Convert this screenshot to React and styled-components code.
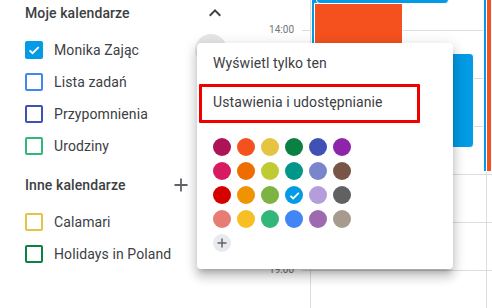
import React from 'react';
import styled, { createGlobalStyle } from 'styled-components';

const Global = createGlobalStyle`
  html, body { margin: 0; padding: 0; background: #fff; }
  body { font-family: Roboto, "Noto Sans", Arial, sans-serif; -webkit-font-smoothing: antialiased; }
`;

const Page = styled.div`
  position: relative;
  display: flex;
  width: 492px;
  height: 308px;
  overflow: hidden;
  background: #fff;
  color: #3c4043;
`;

const Sidebar = styled.aside`
  width: 256px;
  flex: none;
  display: flex;
  flex-direction: column;
`;

const SectionHeader = styled.div`
  display: flex;
  align-items: center;
  gap: 10px;
  height: 26px;
  margin-top: ${p => p.$top || 0}px;
  padding: 0 29px 0 25px;
  font-size: 14px;
  font-weight: 500;
  letter-spacing: 0.1px;
`;

const SectionTitle = styled.span`
  flex: 1;
`;

const IconButton = styled.span`
  width: 24px;
  height: 24px;
  flex: none;
  display: flex;
  align-items: center;
  justify-content: center;
`;

const CalList = styled.div`
  display: flex;
  flex-direction: column;
  padding-top: 8px;
`;

const CalRow = styled.div`
  display: flex;
  align-items: center;
  height: 32px;
  padding: 0 29px 0 25px;
  font-size: 14px;
  letter-spacing: 0.1px;
`;

const Box = styled.span`
  width: 18px;
  height: 18px;
  flex: none;
  box-sizing: border-box;
  border: 2px solid ${p => p.$color};
  border-radius: 2px;
  background: ${p => (p.$checked ? p.$color : 'transparent')};
  display: flex;
  align-items: center;
  justify-content: center;
  margin-right: 11px;
`;

const OptionsHover = styled.span`
  margin-left: auto;
  width: 32px;
  height: 32px;
  border-radius: 50%;
  background: #e6e6e6;
`;

const Schedule = styled.div`
  flex: 1;
  display: flex;
  height: 100%;
`;

const TimeColumn = styled.div`
  width: 54px;
  flex: none;
  padding-top: 30px;
  box-sizing: border-box;
`;

const HourSlot = styled.div`
  position: relative;
  height: 48px;
  display: flex;
  justify-content: flex-end;
  padding-right: 16px;
  &::after {
    content: '';
    position: absolute;
    right: 0;
    top: 0;
    width: 8px;
    height: 1px;
    background: #dadce0;
  }
`;

const HourLabel = styled.span`
  font-size: 10px;
  line-height: 12px;
  margin-top: -6px;
  color: #70757a;
`;

const DayColumn = styled.div`
  position: relative;
  box-sizing: border-box;
  ${p => (p.$width ? `width: ${p.$width}px; flex: none;` : 'flex: 1;')}
  border-left: 1px solid #dadce0;
  background-image: linear-gradient(to bottom, #dadce0 1px, transparent 1px);
  background-size: 100% 48px;
  background-position: 0 30px;
`;

const Event = styled.div`
  position: absolute;
  box-sizing: border-box;
  left: ${p => p.$left}px;
  top: ${p => p.$top}px;
  width: ${p => p.$width}px;
  height: ${p => p.$height}px;
  background: ${p => p.$color};
  border: 1px solid #fff;
  border-radius: ${p => (p.$flat ? 0 : 4)}px;
`;

const Menu = styled.div`
  position: absolute;
  left: 197px;
  top: 43px;
  width: 256px;
  height: 226px;
  box-sizing: border-box;
  background: #fff;
  border-radius: 4px;
  box-shadow: 0 8px 10px 1px rgba(0, 0, 0, 0.14), 0 3px 14px 2px rgba(0, 0, 0, 0.12),
    0 5px 5px -3px rgba(0, 0, 0, 0.2);
  display: flex;
  flex-direction: column;
  z-index: 5;
`;

const MenuItem = styled.div`
  height: 39px;
  display: flex;
  align-items: center;
  padding-left: 16px;
  font-size: 14px;
  letter-spacing: 0.1px;
  color: #3c4043;
`;

const Highlight = styled.div`
  position: absolute;
  left: 2px;
  top: 41px;
  width: 221px;
  height: 39px;
  box-sizing: border-box;
  border: 3px solid #f20000;
  border-radius: 1px;
`;

const Swatches = styled.div`
  display: grid;
  grid-template-columns: repeat(6, 24px);
  grid-auto-rows: 24px;
  margin: 14px 0 0 13px;
`;

const Swatch = styled.span`
  justify-self: center;
  align-self: center;
  width: 18px;
  height: 18px;
  border-radius: 50%;
  background: ${p => p.$color};
  display: flex;
  align-items: center;
  justify-content: center;
`;

const ChevronUp = () => (
  <svg width="24" height="24" viewBox="0 0 24 24">
    <path d="M7.41 15.41 12 10.83l4.59 4.58L18 14l-6-6-6 6z" fill="#3c4043" />
  </svg>
);

const PlusIcon = ({ size = 24, color = '#5f6368', w = 1.8, span = 6.5 }) => (
  <svg width={size} height={size} viewBox="0 0 24 24">
    <path
      d={`M12 ${12 - span}v${span * 2}M${12 - span} 12h${span * 2}`}
      stroke={color}
      strokeWidth={w}
      fill="none"
    />
  </svg>
);

const Check = ({ size = 14 }) => (
  <svg width={size} height={size} viewBox="0 0 24 24">
    <path d="M4.5 12.5l5 5L20 7" stroke="#fff" strokeWidth="3.2" fill="none" />
  </svg>
);

const myCalendars = [
  { name: 'Monika Zając', color: '#039be5', checked: true, hover: true },
  { name: 'Lista zadań', color: '#4285f4' },
  { name: 'Przypomnienia', color: '#3f51b5' },
  { name: 'Urodziny', color: '#33b679' },
];

const otherCalendars = [
  { name: 'Calamari', color: '#e4c441' },
  { name: 'Holidays in Poland', color: '#0b8043' },
];

const palette = [
  '#ad1457', '#f4511e', '#e4c441', '#0b8043', '#3f51b5', '#8e24aa',
  '#d81b60', '#ef6c00', '#c0ca33', '#009688', '#7986cb', '#795548',
  '#d50000', '#f09300', '#7cb342', '#039be5', '#b39ddb', '#616161',
  '#e67c73', '#f6bf26', '#33b679', '#4285f4', '#9e69af', '#a79b8e',
];

const hours = ['14:00', '15:00', '16:00', '17:00', '18:00', '19:00'];

const CalendarRow = ({ cal }) => (
  <CalRow>
    <Box $color={cal.color} $checked={cal.checked}>
      {cal.checked && <Check />}
    </Box>
    <span>{cal.name}</span>
    {cal.hover && <OptionsHover />}
  </CalRow>
);

export default function App() {
  return (
    <>
      <Global />
      <Page>
        <Sidebar>
          <SectionHeader>
            <SectionTitle>Moje kalendarze</SectionTitle>
            <IconButton>
              <ChevronUp />
            </IconButton>
          </SectionHeader>
          <CalList>
            {myCalendars.map(c => (
              <CalendarRow key={c.name} cal={c} />
            ))}
          </CalList>
          <SectionHeader $top={10}>
            <SectionTitle>Inne kalendarze</SectionTitle>
            <IconButton>
              <PlusIcon />
            </IconButton>
            <IconButton>
              <ChevronUp />
            </IconButton>
          </SectionHeader>
          <CalList>
            {otherCalendars.map(c => (
              <CalendarRow key={c.name} cal={c} />
            ))}
          </CalList>
        </Sidebar>

        <Schedule>
          <TimeColumn>
            {hours.map(h => (
              <HourSlot key={h}>
                <HourLabel>{h}</HourLabel>
              </HourSlot>
            ))}
          </TimeColumn>
          <DayColumn $width={176}>
            <Event $color="#039be5" $left={0} $top={-10} $width={12} $height={200} $flat />
            <Event $color="#f4511e" $left={3} $top={3} $width={89} $height={170} $flat />
            <Event $color="#039be5" $left={5} $top={-10} $width={133} $height={14} />
            <Event $color="#039be5" $left={91} $top={53} $width={72} $height={95} />
            <Event $color="#039be5" $left={172} $top={-10} $width={6} $height={182} $flat />
          </DayColumn>
          <DayColumn>
            <Event $color="#f4511e" $left={-1} $top={-10} $width={6} $height={182} $flat />
          </DayColumn>
        </Schedule>

        <Menu>
          <MenuItem>Wyświetl tylko ten</MenuItem>
          <MenuItem>Ustawienia i udostępnianie</MenuItem>
          <Highlight />
          <Swatches>
            {palette.map(c => (
              <Swatch key={c} $color={c}>
                {c === '#039be5' && <Check size={13} />}
              </Swatch>
            ))}
            <Swatch $color="#e8eaed">
              <PlusIcon size={18} w={2} span={6} />
            </Swatch>
          </Swatches>
        </Menu>
      </Page>
    </>
  );
}
